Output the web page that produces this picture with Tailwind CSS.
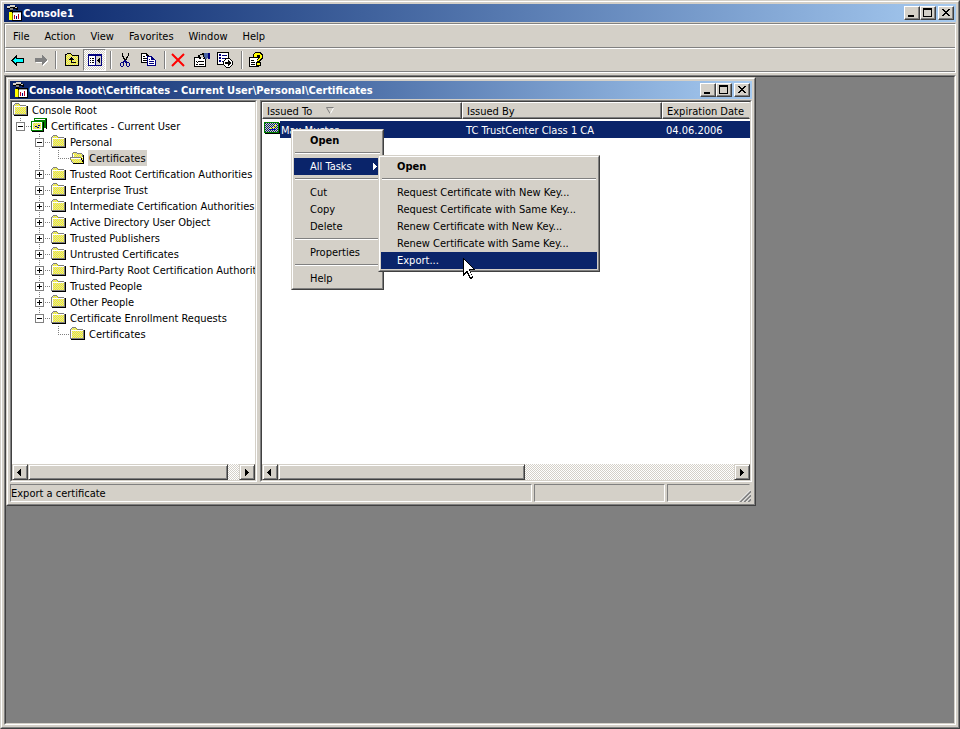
<!DOCTYPE html>
<html lang="en">

<head>
    <meta charset="UTF-8">
    <meta name="viewport" content="width=device-width, initial-scale=1.0">
    <title>Console1</title>
    <script src="https://cdn.jsdelivr.net/npm/@tailwindcss/browser@4"></script>
    <style>
        body {
            font-family: Tahoma, 'DejaVu Sans Condensed', 'DejaVu Sans', sans-serif;
            font-stretch: condensed;
        }
    </style>
</head>

<body class="bg-[#d4d0c8] text-[11px] leading-4 text-black">
    <!-- Icon sprites -->
    <svg class="absolute size-0">
        <defs>
            <pattern id="dither" width="2" height="2" patternUnits="userSpaceOnUse">
                <path fill="#d4d0c8" d="M0 0h2v2H0z" />
                <path fill="#ffff00" d="M0 0h1v1H0zM1 1h1v1H1z" />
            </pattern>
            <pattern id="dither-odd" width="2" height="2" patternUnits="userSpaceOnUse">
                <path fill="#ffff00" d="M0 0h2v2H0z" />
                <path fill="#d4d0c8" d="M0 0h1v1H0zM1 1h1v1H1z" />
            </pattern>
            <pattern id="navy-dither" width="2" height="2" patternUnits="userSpaceOnUse">
                <path fill="#0a246a" d="M0 0h2v2H0z" />
                <path fill="#d4d0c8" d="M0 0h1v1H0zM1 1h1v1H1z" />
            </pattern>
        </defs>
        <symbol id="folder" viewBox="0 0 16 16">
            <path fill="#000" d="M15 4h1v10H2v-1h13z" />
            <path fill="#808080" d="M3 1h4v1H3zM2 2h1v1H2zM7 2h1v1H7zM1 3h1v10H1zM8 3h6v1H8zM14 4h1v9h-1zM2 12h12v1H2z" />
            <path fill="#fff" d="M2 4h12v1H3v7H2z" />
            <path fill="url(#dither)" d="M3 2h4v1h1v1H2V3h1zM3 5h11v7H3z" />
        </symbol>
        <symbol id="folder-open" viewBox="0 0 16 16">
            <path fill="url(#dither-odd)" d="M4 3h4v1h5v4h1v5H4v-1H3v-2H2V8h2z" />
            <path fill="#808080" d="M4 2h4v1H4zM3 3h1v4H3zM8 3h5v1H8zM13 4h1v3h-1zM1 7h11v1H1zM1 8h1v2H1zM2 10h1v2H2zM3 12h1v1H3z" />
            <path fill="#fff" d="M2 8h10v1H2zM4 4h1v3H4z" />
            <path fill="#000" d="M14 5h1v8h-1zM4 13h11v1H4zM12 8h1v2h-1zM13 10h1v2h-1z" />
        </symbol>
        <symbol id="certs" viewBox="0 0 16 16">
            <path fill="#008000" d="M3 0h13v10H3z" />
            <path fill="#fff" d="M4 1h10v1H4z" />
            <path fill="#000" d="M15 1h1v10h-1zM12 4h1v10h-1zM1 13h12v1H1z" />
            <path fill="#008000" d="M0 3h12v10H0z" />
            <path fill="#fff" d="M1 4h10v8H1z" />
            <path fill="url(#dither)" d="M2 5h8v6H2z" />
            <path fill="#000080" d="M4 8h2v1H4zM7 7h2v1H7zM6 9h2v1H6z" />
        </symbol>
        <symbol id="cert" viewBox="0 0 16 16">
            <path fill="#008000" d="M0 1h15v11H0z" />
            <path fill="#000" d="M1 12h15v1H1zM15 2h1v10h-1z" />
            <path fill="url(#navy-dither)" d="M1 2h13v9H1z" />
            <path fill="#ffff00" d="M6 7h2v1H6zM11 4h1v2h-1zM9 6h2v1H9z" />
            <path fill="#0000c0" d="M5 8h7v1H5z" />
        </symbol>
        <symbol id="console" viewBox="0 0 16 16">
            <path fill="#000" d="M1 1h9v1h2v3h-2v-1H7v3H4V4H1zM6 6h10v10H6z" />
            <path fill="#d4d0c8" d="M1 1h3v2H1zM4 0h5v2H4zM9 2h2v1H9z" />
            <path fill="#808080" d="M4 3h3v2H4z" />
            <path fill="#ffff00" d="M3 7h3v8H3z" />
            <path fill="#808000" d="M6 8h1v7H6z" />
            <path fill="#fff" d="M7 7h8v8H7z" />
            <path fill="#a0a0a4" d="M7 7h8v1H7z" />
            <path fill="#c00020" d="M8 10h1v4H8zM12 9h1v5h-1z" />
            <path fill="#000080" d="M10 11h1v3h-1z" />
        </symbol>
        <!-- Tree connectors -->
        <symbol id="box" viewBox="0 0 19 16">
            <path fill="#fff" d="M4 4h9v9H4z" />
            <path fill="none" stroke="#808080" d="M4.500 4.500h8v8h-8z" />
            <path fill="#000" d="M6 8h5v1H6z" />
            <path stroke="#808080" stroke-dasharray="1 1" d="M14 8.500h5" />
        </symbol>
        <symbol id="up-dots" viewBox="0 0 19 16">
            <path stroke="#808080" stroke-dasharray="1 1" d="M8.500 0v4" />
        </symbol>
        <symbol id="minus-last" viewBox="0 0 19 16">
            <use href="#up-dots" width="19" height="16" />
            <use href="#box" width="19" height="16" />
        </symbol>
        <symbol id="minus" viewBox="0 0 19 16">
            <use href="#minus-last" width="19" height="16" />
            <path stroke="#808080" stroke-dasharray="1 1" d="M8.500 14v2" />
        </symbol>
        <symbol id="plus" viewBox="0 0 19 16">
            <use href="#minus" width="19" height="16" />
            <path fill="#000" d="M8 6h1v5H8z" />
        </symbol>
        <symbol id="vline" viewBox="0 0 19 16">
            <path stroke="#808080" stroke-dasharray="1 1" d="M8.500 0v16" />
        </symbol>
        <symbol id="elbow" viewBox="0 0 19 16">
            <path fill="none" stroke="#808080" stroke-dasharray="1 1" d="M8.500 0v8.500H19" />
        </symbol>
        <!-- Caption buttons -->
        <symbol id="win-min" viewBox="0 0 16 14">
            <path fill="#000" d="M4 9h6v2H4z" />
        </symbol>
        <symbol id="win-max" viewBox="0 0 16 14">
            <path fill="#000" fill-rule="evenodd" d="M3 2h9v9H3zM4 4v6h7V4z" />
        </symbol>
        <symbol id="win-close" viewBox="0 0 16 14">
            <path fill="#000" d="M4 3h2v1h1v1h2V4h1V3h2v1h-1v1h-1v1H9v1h1v1h1v1h1v1h-2V9H9V8H7v1H6v1H4V9h1V8h1V7h1V6H6V5H5V4H4z" />
        </symbol>
    </svg>

    <div class="flex min-h-screen flex-col border border-t-[#d4d0c8] border-l-[#d4d0c8] border-r-[#404040] border-b-[#404040]">
        <div class="flex flex-1 flex-col border border-t-white border-l-white border-r-[#808080] border-b-[#808080] p-0.5">

            <!-- Title bar -->
            <header class="flex h-[18px] items-center bg-linear-to-r from-[#0a246a] to-[#a6caf0] px-0.5 font-bold text-white">
                <svg class="size-4" shape-rendering="crispEdges"><use href="#console" /></svg>
                <h1 class="ml-px flex-1 pt-0.5">Console1</h1>
                <button aria-label="Minimize" class="h-[14px] w-4 border border-t-white border-l-white border-r-[#404040] border-b-[#404040] bg-[#d4d0c8] shadow-[inset_-1px_-1px_#808080]"><svg class="-m-px h-[14px] w-4" shape-rendering="crispEdges"><use href="#win-min" /></svg></button>
                <button aria-label="Maximize" class="h-[14px] w-4 border border-t-white border-l-white border-r-[#404040] border-b-[#404040] bg-[#d4d0c8] shadow-[inset_-1px_-1px_#808080]"><svg class="-m-px h-[14px] w-4" shape-rendering="crispEdges"><use href="#win-max" /></svg></button>
                <button aria-label="Close" class="ml-0.5 h-[14px] w-4 border border-t-white border-l-white border-r-[#404040] border-b-[#404040] bg-[#d4d0c8] shadow-[inset_-1px_-1px_#808080]"><svg class="-m-px h-[14px] w-4" shape-rendering="crispEdges"><use href="#win-close" /></svg></button>
            </header>

            <!-- Menu bar -->
            <div class="mt-px border border-[#808080] border-b-white border-r-white">
                <nav class="flex h-6 items-center gap-[3px] border-t border-l border-b border-t-white border-l-white border-b-[#808080] px-px pt-0.5">
                    <button class="px-1.5">File</button>
                    <button class="px-1.5">Action</button>
                    <button class="px-1.5">View</button>
                    <button class="px-1.5">Favorites</button>
                    <button class="px-1.5">Window</button>
                    <button class="px-1.5">Help</button>
                </nav>
                <!-- Toolbar -->
                <div class="flex h-6 items-center border-t border-l border-b border-t-white border-l-white border-b-[#808080]" role="toolbar">
                    <button aria-label="Back" class="flex h-[22px] w-[23px] items-center justify-center">
                        <svg class="size-4" viewBox="0 0 16 16" shape-rendering="crispEdges">
                            <path fill="#000" d="M6 3h1v3h7v5H7v3H6v-1H5v-1H4v-1H3v-1H2V9H1V8h1V7h1V6h1V5h1V4h1z" />
                            <path fill="#00ffff" d="M5 6h1v1h7v3H6v1H5v-1H4V9H3V8h1V7h1z" />
                        </svg>
                    </button>
                    <button aria-label="Forward" class="flex h-[22px] w-[23px] items-center justify-center">
                        <svg class="size-4" viewBox="0 0 16 16" shape-rendering="crispEdges">
                            <path fill="#fff" d="M10 4h1v1h1v1h1v1h1v1h1v2h-1v1h-1v1h-1v1h-1v1h-1v-3H3v-1h8z" />
                            <path fill="#808080" d="M9 3h1v1h1v1h1v1h1v1h1v2h-1v1h-1v1h-1v1h-1v1H9v-3H2V6h7z" />
                        </svg>
                    </button>
                    <div class="mx-[3px] h-[18px] w-0.5 border-l border-[#808080] bg-white"></div>
                    <button aria-label="Up one level" class="flex h-[22px] w-[23px] items-center justify-center">
                        <svg class="size-4" viewBox="0 0 16 16" shape-rendering="crispEdges">
                            <path fill="#000" d="M3 1h4v1h1v1h7v11H1V2h2z" />
                            <path fill="url(#dither)" d="M3 2h4v1h1v1h6v9H2V3h1z" />
                            <path fill="#000" d="M7 5h1v1h1v1h1v1H8v2h4v1H7V8H5V7h1V6h1z" />
                        </svg>
                    </button>
                    <button aria-label="Show/Hide console tree" class="flex h-[22px] w-[23px] items-center justify-center border border-t-[#808080] border-l-[#808080] border-r-white border-b-white bg-[repeating-conic-gradient(#fff_0_25%,#d4d0c8_0_50%)] bg-[length:2px_2px]">
                        <svg class="size-4" viewBox="0 0 16 16" shape-rendering="crispEdges">
                            <path fill="#000080" d="M1 2h14v12H1z" />
                            <path fill="#fff" d="M2 4h6v9H2z" />
                            <path fill="#d4d0c8" d="M9 4h5v9H9z" />
                            <path fill="#000" d="M3 6h1v1H3zM5 6h2v1H5zM3 8h1v1H3zM5 8h2v1H5zM3 10h1v1H3zM5 10h2v1H5zM12 6h1v5h-1v-1h-1V9h-1V8h1V7h1z" />
                        </svg>
                    </button>
                    <div class="mr-px ml-1 h-[18px] w-0.5 border-l border-[#808080] bg-white"></div>
                    <button aria-label="Cut" class="flex h-[22px] w-[23px] items-center justify-center">
                        <svg class="size-4" viewBox="0 0 16 16" shape-rendering="crispEdges">
                            <path fill="#000" d="M5 1h1v3h1v2h1v1h1V5h1V4h1V1h1v3h-1v2h-1v2H9v1H7V7H6V5H5z" />
                            <path fill="#000080" fill-rule="evenodd" d="M7 8h2v1h1v1h2v1h1v3h-1v1h-2v-1H9v-3H8v-1H7v4H6v1H4v-1H3v-3h1v-1h2V9h1zM4 11v3h2v-3zM10 11v3h2v-3z" />
                        </svg>
                    </button>
                    <button aria-label="Copy" class="flex h-[22px] w-6 items-center justify-center">
                        <svg class="size-4" viewBox="0 0 16 16" shape-rendering="crispEdges">
                            <path fill="#000" d="M1 1h6v1h1v1h1v8H1z" />
                            <path fill="#fff" d="M2 2h4v2h2v6H2z" />
                            <path fill="#000" d="M3 4h2v1H3zM3 6h4v1H3zM3 8h4v1H3z" />
                            <path fill="#000080" d="M7 4h5v1h1v1h1v1h1v1h1v6H7z" />
                            <path fill="#fff" d="M8 5h3v3h4v5H8z" />
                            <path fill="#000080" d="M9 7h1v1H9zM9 9h5v1H9zM9 11h5v1H9z" />
                        </svg>
                    </button>
                    <div class="mr-px ml-1 h-[18px] w-0.5 border-l border-[#808080] bg-white"></div>
                    <button aria-label="Delete" class="flex h-[22px] w-[23px] items-center justify-center">
                        <svg class="size-4" viewBox="0 0 16 16">
                            <path fill="none" stroke="#ff0000" stroke-width="2" d="M1 2l12 12M13 2L1 14" />
                        </svg>
                    </button>
                    <button aria-label="Properties" class="flex h-[22px] w-[23px] items-center justify-center">
                        <svg class="size-4" viewBox="0 0 16 16" shape-rendering="crispEdges">
                            <path fill="#000" d="M0 5h12v10H0z" />
                            <path fill="#fff" d="M1 6h10v8H1z" />
                            <path fill="#000" d="M2 9l1 1 2-2v1l-2 2-1-1zM5 9h5v1H5zM2 12h2v1H2zM5 12h5v1H5z" />
                            <path fill="#000" d="M4 3h2V2h2V1h4v6H9V6H7v1H5V6h1V5H4z" />
                            <path fill="#d4d0c8" d="M6 3h3v2H6zM7 5h3v1H7z" />
                            <path fill="#4a64a0" d="M10 1h6v5h-3v1h-2V5h-1z" />
                            <path fill="#000080" d="M14 1h2v6h-2z" />
                        </svg>
                    </button>
                    <button aria-label="Export list" class="flex h-[22px] w-6 items-center justify-center">
                        <svg class="size-4" viewBox="0 0 16 16" shape-rendering="crispEdges">
                            <path fill="#000" d="M0 0h12v13H0z" />
                            <path fill="#fff" d="M1 1h10v11H1z" />
                            <path fill="#000080" d="M2 2h2v2H2zM5 3h5v1H5zM2 5h2v2H2zM5 6h4v1H5zM2 8h2v2H2zM5 9h2v1H5z" />
                            <path fill="#000" d="M8 6h5v1h1v1h1v1h1v4h-1v1h-1v1h-1v1H9v-1H8v-1H7v-1H6V9h1V8h1z" />
                            <path fill="#fff" d="M9 7h4v1h1v1h1v4h-1v1h-1v1H9v-1H8v-1H7V9h1V8h1z" />
                            <path fill="#000" d="M8 10h3V8h1v1h1v1h1v2h-1v1h-1v1h-1v-2H8z" />
                        </svg>
                    </button>
                    <div class="mr-px ml-1 h-[18px] w-0.5 border-l border-[#808080] bg-white"></div>
                    <button aria-label="Help" class="flex h-[22px] w-6 items-center justify-center">
                        <svg class="size-4" viewBox="0 0 16 16" shape-rendering="crispEdges">
                            <path fill="#000" d="M1 5h10v10H1z" />
                            <path fill="#fff" d="M2 6h8v8H2z" />
                            <path fill="#000" d="M3 8h3v1H3zM3 10h4v1H3zM3 12h4v1H3z" />
                            <path fill="#000" d="M7 0h6v1h1v1h1v5h-1v1h-1v1h-1v1h1v4H8v-4h1V7h2V5H9v1H5V2h1V1h1z" />
                            <path fill="#ffff00" d="M7 1h5v1h1v1h1v3h-1v1h-1v1h-1v1H9V8h1V7h1V6h1V3H9v2H6V2h1zM9 11h3v2H9z" />
                        </svg>
                    </button>
                </div>
            </div>

            <!-- MDI workspace -->
            <main class="mt-0.5 flex flex-1 border border-t-[#808080] border-l-[#808080] border-r-white border-b-white">
                <div class="flex flex-1 items-start border border-t-[#404040] border-l-[#404040] border-r-[#d4d0c8] border-b-[#d4d0c8] bg-[#808080]">

                    <section class="w-[750px] max-w-full border border-t-[#d4d0c8] border-l-[#d4d0c8] border-r-[#404040] border-b-[#404040] bg-[#d4d0c8]">
                        <div class="border border-t-white border-l-white border-r-[#808080] border-b-[#808080] p-0.5">
                            <header class="flex h-[18px] items-center bg-linear-to-r from-[#0a246a] to-[#a6caf0] px-0.5 font-bold text-white">
                                <svg class="size-4" shape-rendering="crispEdges"><use href="#console" /></svg>
                                <h2 class="ml-px flex-1 pt-0.5">Console Root\Certificates - Current User\Personal\Certificates</h2>
                                <button aria-label="Minimize" class="h-[14px] w-4 border border-t-white border-l-white border-r-[#404040] border-b-[#404040] bg-[#d4d0c8] shadow-[inset_-1px_-1px_#808080]"><svg class="-m-px h-[14px] w-4" shape-rendering="crispEdges"><use href="#win-min" /></svg></button>
                                <button aria-label="Maximize" class="h-[14px] w-4 border border-t-white border-l-white border-r-[#404040] border-b-[#404040] bg-[#d4d0c8] shadow-[inset_-1px_-1px_#808080]"><svg class="-m-px h-[14px] w-4" shape-rendering="crispEdges"><use href="#win-max" /></svg></button>
                                <button aria-label="Close" class="ml-0.5 h-[14px] w-4 border border-t-white border-l-white border-r-[#404040] border-b-[#404040] bg-[#d4d0c8] shadow-[inset_-1px_-1px_#808080]"><svg class="-m-px h-[14px] w-4" shape-rendering="crispEdges"><use href="#win-close" /></svg></button>
                            </header>

                            <div class="mt-px flex gap-[3px]">
                                <!-- Console tree -->
                                <div class="w-[247px] shrink-0 border border-t-[#808080] border-l-[#808080] border-r-white border-b-white">
                                    <div class="flex h-[380px] flex-col border border-t-[#404040] border-l-[#404040] border-r-[#d4d0c8] border-b-[#d4d0c8] bg-white">
                                        <ul class="flex-1 overflow-hidden leading-[18px] whitespace-nowrap">
                                            <li class="flex h-4"><svg class="mr-[3px] size-4 shrink-0" shape-rendering="crispEdges"><use href="#folder" /></svg><span class="px-px">Console Root</span></li>
                                            <li class="flex h-4"><svg class="h-4 w-[19px] shrink-0" shape-rendering="crispEdges"><use href="#minus-last" /></svg><svg class="mr-[3px] size-4 shrink-0" shape-rendering="crispEdges"><use href="#certs" /></svg><span class="px-px">Certificates - Current User</span></li>
                                            <li class="flex h-4 pl-[19px]"><svg class="h-4 w-[19px] shrink-0" shape-rendering="crispEdges"><use href="#minus" /></svg><svg class="mr-[3px] size-4 shrink-0" shape-rendering="crispEdges"><use href="#folder" /></svg><span class="px-px">Personal</span></li>
                                            <li class="flex h-4 pl-[19px]"><svg class="h-4 w-[19px] shrink-0" shape-rendering="crispEdges"><use href="#vline" /></svg><svg class="h-4 w-[19px] shrink-0" shape-rendering="crispEdges"><use href="#elbow" /></svg><svg class="mr-[3px] size-4 shrink-0" shape-rendering="crispEdges"><use href="#folder-open" /></svg><span class="bg-[#d4d0c8] px-px">Certificates</span></li>
                                            <li class="flex h-4 pl-[19px]"><svg class="h-4 w-[19px] shrink-0" shape-rendering="crispEdges"><use href="#plus" /></svg><svg class="mr-[3px] size-4 shrink-0" shape-rendering="crispEdges"><use href="#folder" /></svg><span class="px-px">Trusted Root Certification Authorities</span></li>
                                            <li class="flex h-4 pl-[19px]"><svg class="h-4 w-[19px] shrink-0" shape-rendering="crispEdges"><use href="#plus" /></svg><svg class="mr-[3px] size-4 shrink-0" shape-rendering="crispEdges"><use href="#folder" /></svg><span class="px-px">Enterprise Trust</span></li>
                                            <li class="flex h-4 pl-[19px]"><svg class="h-4 w-[19px] shrink-0" shape-rendering="crispEdges"><use href="#plus" /></svg><svg class="mr-[3px] size-4 shrink-0" shape-rendering="crispEdges"><use href="#folder" /></svg><span class="px-px">Intermediate Certification Authorities</span></li>
                                            <li class="flex h-4 pl-[19px]"><svg class="h-4 w-[19px] shrink-0" shape-rendering="crispEdges"><use href="#plus" /></svg><svg class="mr-[3px] size-4 shrink-0" shape-rendering="crispEdges"><use href="#folder" /></svg><span class="px-px">Active Directory User Object</span></li>
                                            <li class="flex h-4 pl-[19px]"><svg class="h-4 w-[19px] shrink-0" shape-rendering="crispEdges"><use href="#plus" /></svg><svg class="mr-[3px] size-4 shrink-0" shape-rendering="crispEdges"><use href="#folder" /></svg><span class="px-px">Trusted Publishers</span></li>
                                            <li class="flex h-4 pl-[19px]"><svg class="h-4 w-[19px] shrink-0" shape-rendering="crispEdges"><use href="#plus" /></svg><svg class="mr-[3px] size-4 shrink-0" shape-rendering="crispEdges"><use href="#folder" /></svg><span class="px-px">Untrusted Certificates</span></li>
                                            <li class="flex h-4 pl-[19px]"><svg class="h-4 w-[19px] shrink-0" shape-rendering="crispEdges"><use href="#plus" /></svg><svg class="mr-[3px] size-4 shrink-0" shape-rendering="crispEdges"><use href="#folder" /></svg><span class="px-px">Third-Party Root Certification Authorities</span></li>
                                            <li class="flex h-4 pl-[19px]"><svg class="h-4 w-[19px] shrink-0" shape-rendering="crispEdges"><use href="#plus" /></svg><svg class="mr-[3px] size-4 shrink-0" shape-rendering="crispEdges"><use href="#folder" /></svg><span class="px-px">Trusted People</span></li>
                                            <li class="flex h-4 pl-[19px]"><svg class="h-4 w-[19px] shrink-0" shape-rendering="crispEdges"><use href="#plus" /></svg><svg class="mr-[3px] size-4 shrink-0" shape-rendering="crispEdges"><use href="#folder" /></svg><span class="px-px">Other People</span></li>
                                            <li class="flex h-4 pl-[19px]"><svg class="h-4 w-[19px] shrink-0" shape-rendering="crispEdges"><use href="#minus-last" /></svg><svg class="mr-[3px] size-4 shrink-0" shape-rendering="crispEdges"><use href="#folder" /></svg><span class="px-px">Certificate Enrollment Requests</span></li>
                                            <li class="flex h-4 pl-[38px]"><svg class="h-4 w-[19px] shrink-0" shape-rendering="crispEdges"><use href="#elbow" /></svg><svg class="mr-[3px] size-4 shrink-0" shape-rendering="crispEdges"><use href="#folder" /></svg><span class="px-px">Certificates</span></li>
                                        </ul>
                                        <div class="flex h-4 bg-[repeating-conic-gradient(#fff_0_25%,#d4d0c8_0_50%)] bg-[length:2px_2px]">
                                            <button aria-label="Scroll left" class="flex w-4 items-center justify-center border border-[#d4d0c8] border-r-[#404040] border-b-[#404040] bg-[#d4d0c8] pr-0.5 shadow-[inset_1px_1px_#fff,inset_-1px_-1px_#808080]"><svg class="h-[7px] w-1" viewBox="0 0 4 7" shape-rendering="crispEdges"><path d="M3 0h1v7H3V6H2V5H1V4H0V3h1V2h1V1h1z" /></svg></button>
                                            <div class="w-[200px] border border-[#d4d0c8] border-r-[#404040] border-b-[#404040] bg-[#d4d0c8] shadow-[inset_1px_1px_#fff,inset_-1px_-1px_#808080]"></div>
                                            <button aria-label="Scroll right" class="ml-auto flex w-4 items-center justify-center border border-[#d4d0c8] border-r-[#404040] border-b-[#404040] bg-[#d4d0c8] shadow-[inset_1px_1px_#fff,inset_-1px_-1px_#808080]"><svg class="h-[7px] w-1" viewBox="0 0 4 7" shape-rendering="crispEdges"><path d="M0 0h1v1h1v1h1v1h1v1H3v1H2v1H1v1H0z" /></svg></button>
                                        </div>
                                    </div>
                                </div>

                                <!-- Certificate list -->
                                <div class="min-w-0 flex-1 border border-t-[#808080] border-l-[#808080] border-r-white border-b-white">
                                    <div class="relative flex h-[380px] flex-col border border-t-[#404040] border-l-[#404040] border-r-[#d4d0c8] border-b-[#d4d0c8] bg-white">
                                        <div class="flex-1 overflow-hidden">
                                            <table class="w-full table-fixed text-left leading-[18px] whitespace-nowrap">
                                                <thead>
                                                    <tr>
                                                        <th class="w-[200px] p-0 pb-0.5 font-normal">
                                                            <div class="flex h-[17px] border border-t-white border-l-white border-r-[#404040] border-b-[#404040] bg-[#d4d0c8] pl-1 shadow-[inset_-1px_-1px_#808080]">Issued To
                                                                <svg class="mt-1 ml-[14px] h-[7px] w-2" viewBox="0 0 8 7"><path fill="none" stroke="#808080" d="M4 6.500L.5.500h7" /><path stroke="#fff" d="M7.500 1L4.500 6.500" /></svg>
                                                            </div>
                                                        </th>
                                                        <th class="w-[200px] p-0 pb-0.5 font-normal">
                                                            <div class="h-[17px] border border-t-white border-l-white border-r-[#404040] border-b-[#404040] bg-[#d4d0c8] pl-1 shadow-[inset_-1px_-1px_#808080]">Issued By</div>
                                                        </th>
                                                        <th class="p-0 pb-0.5 font-normal">
                                                            <div class="h-[17px] border border-t-white border-l-white border-r-[#d4d0c8] border-b-[#404040] bg-[#d4d0c8] pl-1 shadow-[inset_0_-1px_#808080]">Expiration Date</div>
                                                        </th>
                                                    </tr>
                                                </thead>
                                                <tbody>
                                                    <tr class="leading-5 text-white">
                                                        <td class="p-0">
                                                            <div class="flex h-[17px]"><svg class="ml-0.5 size-4 shrink-0" shape-rendering="crispEdges"><use href="#cert" /></svg><span class="flex-1 bg-[#0a246a] pl-px">Max Muster</span></div>
                                                        </td>
                                                        <td class="p-0">
                                                            <div class="h-[17px] bg-[#0a246a] pl-1">TC TrustCenter Class 1 CA</div>
                                                        </td>
                                                        <td class="p-0">
                                                            <div class="h-[17px] bg-[#0a246a] pl-1">04.06.2006</div>
                                                        </td>
                                                    </tr>
                                                </tbody>
                                            </table>
                                        </div>
                                        <div class="flex h-4 bg-[repeating-conic-gradient(#fff_0_25%,#d4d0c8_0_50%)] bg-[length:2px_2px]">
                                            <button aria-label="Scroll left" class="flex w-4 items-center justify-center border border-[#d4d0c8] border-r-[#404040] border-b-[#404040] bg-[#d4d0c8] pr-0.5 shadow-[inset_1px_1px_#fff,inset_-1px_-1px_#808080]"><svg class="h-[7px] w-1" viewBox="0 0 4 7" shape-rendering="crispEdges"><path d="M3 0h1v7H3V6H2V5H1V4H0V3h1V2h1V1h1z" /></svg></button>
                                            <div class="w-[247px] border border-[#d4d0c8] border-r-[#404040] border-b-[#404040] bg-[#d4d0c8] shadow-[inset_1px_1px_#fff,inset_-1px_-1px_#808080]"></div>
                                            <button aria-label="Scroll right" class="ml-auto flex w-4 items-center justify-center border border-[#d4d0c8] border-r-[#404040] border-b-[#404040] bg-[#d4d0c8] shadow-[inset_1px_1px_#fff,inset_-1px_-1px_#808080]"><svg class="h-[7px] w-1" viewBox="0 0 4 7" shape-rendering="crispEdges"><path d="M0 0h1v1h1v1h1v1h1v1H3v1H2v1H1v1H0z" /></svg></button>
                                        </div>

                                        <!-- Context menu -->
                                        <div role="menu" class="absolute top-[27px] left-[29px] w-[93px] border border-[#d4d0c8] border-r-[#404040] border-b-[#404040] bg-[#d4d0c8]">
                                            <div class="flex flex-col border border-t-white border-l-white border-r-[#808080] border-b-[#808080] p-px leading-[17px]">
                                                <button role="menuitem" class="h-[17px] pl-4 text-left font-bold">Open</button>
                                                <hr class="mx-px my-[3px] h-[3px] border-t-[#808080] bg-[linear-gradient(#fff_1px,transparent_1px)]">
                                                <button role="menuitem" class="flex h-[17px] items-center bg-[#0a246a] pl-4 text-white">All Tasks<svg class="mr-1 ml-auto h-[7px] w-1" viewBox="0 0 4 7" shape-rendering="crispEdges"><path fill="#fff" d="M0 0h1v1h1v1h1v1h1v1H3v1H2v1H1v1H0z" /></svg></button>
                                                <hr class="mx-px my-[3px] h-[3px] border-t-[#808080] bg-[linear-gradient(#fff_1px,transparent_1px)]">
                                                <button role="menuitem" class="h-[17px] pl-4 text-left">Cut</button>
                                                <button role="menuitem" class="h-[17px] pl-4 text-left">Copy</button>
                                                <button role="menuitem" class="h-[17px] pl-4 text-left">Delete</button>
                                                <hr class="mx-px my-[3px] h-[3px] border-t-[#808080] bg-[linear-gradient(#fff_1px,transparent_1px)]">
                                                <button role="menuitem" class="h-[17px] pl-4 text-left">Properties</button>
                                                <hr class="mx-px my-[3px] h-[3px] border-t-[#808080] bg-[linear-gradient(#fff_1px,transparent_1px)]">
                                                <button role="menuitem" class="h-[17px] pl-4 text-left">Help</button>
                                            </div>
                                        </div>

                                        <!-- All Tasks submenu -->
                                        <div role="menu" class="absolute top-[53px] left-[116px] w-[222px] border border-[#d4d0c8] border-r-[#404040] border-b-[#404040] bg-[#d4d0c8]">
                                            <div class="flex flex-col border border-t-white border-l-white border-r-[#808080] border-b-[#808080] p-px leading-[17px]">
                                                <button role="menuitem" class="h-[17px] pl-4 text-left font-bold">Open</button>
                                                <hr class="mx-px my-[3px] h-[3px] border-t-[#808080] bg-[linear-gradient(#fff_1px,transparent_1px)]">
                                                <button role="menuitem" class="h-[17px] pl-4 text-left">Request Certificate with New Key...</button>
                                                <button role="menuitem" class="h-[17px] pl-4 text-left">Request Certificate with Same Key...</button>
                                                <button role="menuitem" class="h-[17px] pl-4 text-left">Renew Certificate with New Key...</button>
                                                <button role="menuitem" class="h-[17px] pl-4 text-left">Renew Certificate with Same Key...</button>
                                                <button role="menuitem" class="h-[17px] bg-[#0a246a] pl-4 text-left text-white">Export...</button>
                                            </div>
                                        </div>

                                        <!-- Mouse pointer -->
                                        <svg class="absolute top-[156px] left-[201px] h-[21px] w-3" viewBox="0 0 12 21" shape-rendering="crispEdges">
                                            <path fill="#000" d="M0 0h1v1h1v1h1v1h1v1h1v1h1v1h1v1h1v1h1v1h1v1h1v1h1v1H7v2h1v2h1v2h1v2H9v1H7v-1H6v-2H5v-2H4v-1H3v1H2v1H1v1H0z" />
                                            <path fill="#fff" d="M1 2h1v1h1v1h1v1h1v1h1v1h1v1h1v1h1v1h1v1H6v2h1v2h1v2h1v2H7v-2H6v-2H5v-2H3v1H2v1H1z" />
                                        </svg>
                                    </div>
                                </div>
                            </div>

                            <!-- Status bar -->
                            <footer class="mt-0.5 flex h-[18px] gap-0.5 pr-0.5 leading-[18px]">
                                <p class="w-[522px] border border-t-[#808080] border-l-[#808080] border-r-white border-b-white">Export a certificate</p>
                                <div class="w-[131px] border border-t-[#808080] border-l-[#808080] border-r-white border-b-white"></div>
                                <div class="flex flex-1 items-end justify-end border border-t-[#808080] border-l-[#808080] border-r-transparent border-b-white">
                                    <svg class="-mr-0.5 -mb-px size-3" viewBox="0 0 12 12">
                                        <path fill="#d4d0c8" d="M0 12L12 0v12z" />
                                        <path stroke="#808080" stroke-width="2" d="M1 12L12 1M5 12l7-7M9 12l3-3" />
                                        <path stroke="#fff" d="M0 11.500L11.500 0M3.500 12L12 3.500M7.500 12L12 7.500" />
                                    </svg>
                                </div>
                            </footer>
                        </div>
                    </section>
                </div>
            </main>
        </div>
    </div>
</body>

</html>
